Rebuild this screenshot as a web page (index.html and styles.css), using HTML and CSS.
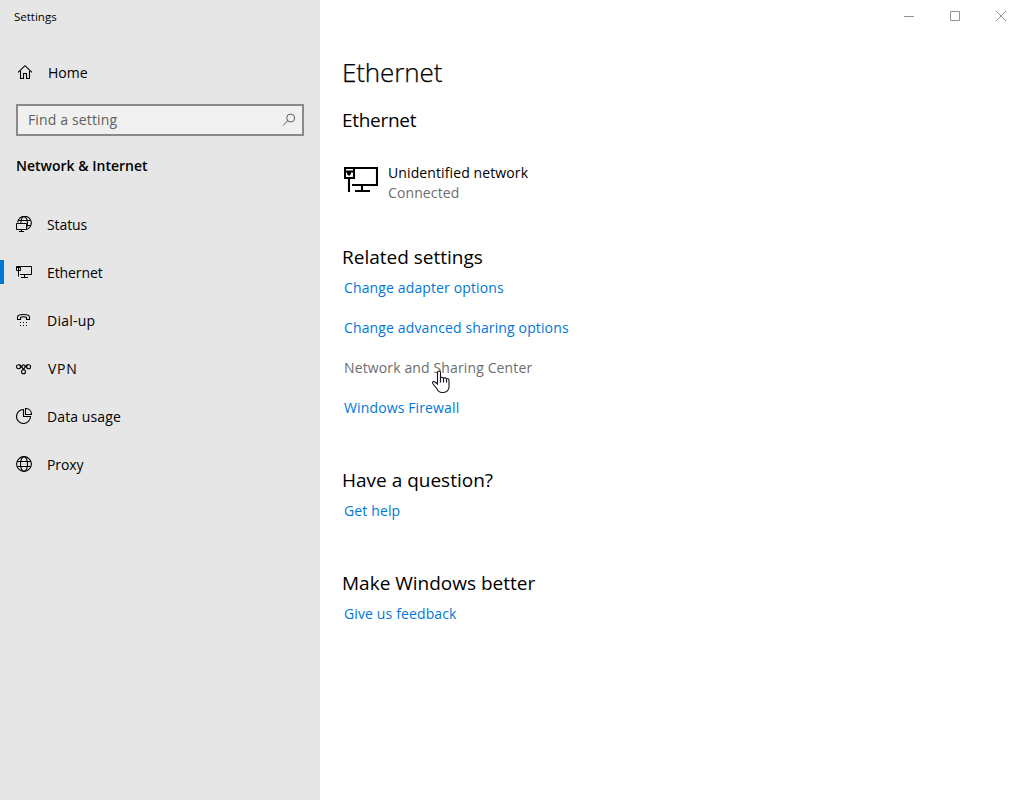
FILE: index.html
```html
<!DOCTYPE html>
<html lang="en">
<head>
<meta charset="utf-8">
<title>Settings</title>
<link rel="stylesheet" href="styles.css">
</head>
<body>
<div class="window">
  <aside class="sidebar">
    <div class="app-title"><span>Settings</span></div>
    <a class="nav-item home">
      <svg class="icon" viewBox="0 0 16 16"><path d="M1 8.300 8 1.700 15 8.300M3.500 7v7.500h3v-5h3v5h3V7"/></svg>
      <span>Home</span>
    </a>
    <div class="search">
      <span class="t-find">Find a setting</span>
      <svg class="search-icon" viewBox="0 0 14 14"><circle cx="8.700" cy="5" r="4"/><path d="M5.800 7.800 1 12.600"/></svg>
    </div>
    <div class="category"><span>Network &amp; Internet</span></div>
    <nav class="nav">
      <a class="nav-item">
        <svg class="icon" viewBox="0 0 16 16"><path d="M1.700 6.500A6.800 6.800 0 1 1 10.500 13.500M4.800 7C5 3 6.500.7 8.200.7s3.300 2.800 3.300 6.300-.6 4.500-1.500 6M2.500 4.500h11.500M11 9.500h3.500"/><path class="sharp" d="M.5 7.500h10v6H.5zM5.500 13.500v2M3 15.500h5"/></svg>
        <span class="t-status">Status</span>
      </a>
      <a class="nav-item active">
        <svg class="icon" viewBox="0 0 16 16"><path class="sharp" d="M5 2.500h10.500v8H4M.5 2.500h4v4h-4zM2.500 6.500v6M8.500 10.500v3M5 13.500h7M.5 3.500h4M2.500 4v2"/></svg>
        <span class="t-ethernet">Ethernet</span>
      </a>
      <a class="nav-item">
        <svg class="icon" viewBox="0 0 16 16"><path d="M1.500 7.500V5.200c0-3.600 12-3.600 12 0v2.300h-3v-2c-1.500-.7-4.500-.7-6 0v2z"/><path class="fill" d="M4 10h1v1H4zM7 10h1v1H7zM10 10h1v1h-1zM4 13h1v1H4zM7 13h1v1H7zM10 13h1v1h-1z"/></svg>
        <span class="t-dial">Dial-up</span>
      </a>
      <a class="nav-item">
        <svg class="icon" viewBox="0 0 16 16"><circle cx="2.500" cy="6.700" r="2"/><circle cx="12.600" cy="6.700" r="2"/><circle cx="7.500" cy="11.700" r="2"/><path d="M3 4.700C6 4.500 5 8 8.500 9.900M12 4.700C9 4.500 10 8 6.500 9.900M4.400 7.200c1.600 0 2-2.400 3.100-2.400s1.600 2.400 3.200 2.400"/></svg>
        <span class="t-vpn">VPN</span>
      </a>
      <a class="nav-item">
        <svg class="icon" viewBox="0 0 16 16"><path d="M7.500 1.500a7 7 0 1 0 7 7h-7z"/><path d="M9.500.5v6h6c0-3.500-2.500-6-6-6z"/></svg>
        <span class="t-data">Data usage</span>
      </a>
      <a class="nav-item">
        <svg class="icon" viewBox="0 0 16 16"><circle cx="8" cy="8" r="7.400"/><ellipse cx="8" cy="8" rx="3.500" ry="7.400"/><path d="M1.500 5.500h13M1.500 10.500h13"/></svg>
        <span class="t-proxy">Proxy</span>
      </a>
    </nav>
  </aside>
  <main class="content">
    <div class="caption-buttons">
      <svg viewBox="0 0 46 32"><path d="M18 16.500h10"/></svg>
      <svg viewBox="0 0 46 32"><path d="M18.500 11.500h9v9h-9z"/></svg>
      <svg viewBox="0 0 46 32"><path d="M18 11l10 10M28 11 18 21"/></svg>
    </div>
    <h1>Ethernet</h1>
    <h2 class="first">Ethernet</h2>
    <div class="network">
      <svg class="network-icon" viewBox="0 0 34 28"><path d="M10 2h23v17H8M1 2h9v10H1zM1 5.500h9M5 12v14M18 19v6M11 25h15M5 6v3.500M3 7.500h4"/></svg>
      <div class="network-text"><span>Unidentified network</span><span class="state">Connected</span></div>
    </div>
    <section class="related">
      <h2>Related settings</h2>
      <a>Change adapter options</a>
      <a>Change advanced sharing options</a>
      <a class="hovered">Network and Sharing Center
        <svg class="cursor" viewBox="0 0 18 24"><path d="M5.500 14V2.500C5.500.5 8.500.5 8.500 2.500V8c.5-1 2.500-1 3 .5.500-1 2.500-.8 3 .7.600-.9 2.500-.6 2.500 1.300V17c0 3-2.500 5.500-5.500 5.500H10c-2.500 0-4-1.500-5-3.500L.8 13.500c-.8-1.500 1-2.500 2.200-1.500z"/><path d="M8.500 7.500v5M11.500 8.500v4M14.500 9.500v3"/></svg>
      </a>
      <a>Windows Firewall</a>
    </section>
    <section class="question">
      <h2>Have a question?</h2>
      <a>Get help</a>
    </section>
    <section class="better">
      <h2>Make Windows better</h2>
      <a>Give us feedback</a>
    </section>
  </main>
</div>
</body>
</html>
```
FILE: styles.css
```css
* { box-sizing: border-box; }
body { margin: 0; background: #fff; color: #000; font: 14px/20px "Open Sans", "Noto Sans", sans-serif; }
.window { display: flex; width: 1024px; height: 800px; overflow: hidden; }
span { white-space: nowrap; }
svg { display: block; flex: none; fill: none; stroke: #000; stroke-width: 1.1; }
.sharp { fill: #e6e6e6; stroke-width: 1; }
.fill { fill: #000; stroke: none; }

.sidebar { width: 320px; background: #e6e6e6; }
.app-title { height: 48px; padding: 7px 0 0 14px; font-size: 11.5px; }
.nav-item { display: flex; align-items: center; gap: 15px; height: 48px; padding-left: 16px; }
.nav-item span { padding-top: 2px; }
.home { padding-left: 17px; }
.icon { width: 16px; height: 16px; }
.search { display: flex; align-items: center; justify-content: space-between; width: 288px; height: 32px; margin: 8px 0 0 16px; padding: 0 6px 0 10px; border: 2px solid #8a8a8a; background: #f0f0f0; color: #606060; }
.search-icon { width: 14px; height: 14px; stroke: #606060; stroke-width: 1; }
.category { height: 64px; padding: 20px 0 0 16px; font-weight: 600; }
.active { background: linear-gradient(#0078d7, #0078d7) 0 50% / 4px 24px no-repeat; }
.t-find { letter-spacing: .14px; }
.t-status, .t-ethernet, .t-proxy { letter-spacing: -.1px; }
.t-dial { letter-spacing: .25px; }
.t-vpn { margin-left: 1px; letter-spacing: .7px; }
.t-data { letter-spacing: .1px; }

.content { flex: 1; padding-left: 22px; }
.caption-buttons { display: flex; justify-content: flex-end; height: 32px; }
.caption-buttons svg { width: 46px; height: 32px; stroke: #929292; stroke-width: 1; }
h1 { height: 80px; margin: 0; padding-top: 24px; font-size: 26px; font-weight: 300; line-height: 32px; letter-spacing: -.1px; -webkit-text-stroke: .25px #000; }
h2 { margin: 0; font-size: 19px; font-weight: 400; line-height: 26px; }
.first { margin-top: -5px; letter-spacing: -.3px; }
.network { display: flex; gap: 10px; height: 41px; margin: 29px 0 0 2px; }
.network-icon { width: 34px; height: 28px; margin-top: 4px; stroke-width: 2.100; }
.network-text { display: flex; flex-direction: column; padding-top: 1px; letter-spacing: .11px; }
.state { color: #6d6d6d; }
.related { margin-top: 41px; }
.question, .better { margin-top: 49px; }
section a { display: block; position: relative; height: 20px; margin-left: 2px; color: #0078d7; letter-spacing: .13px; }
h2 + a { margin-top: 8px; }
section a + a { margin-top: 20px; }
section .hovered { color: #6d6d6d; }
.cursor { position: absolute; left: 88px; top: 12px; width: 18px; height: 24px; fill: #fff; stroke: #111122; }
```
